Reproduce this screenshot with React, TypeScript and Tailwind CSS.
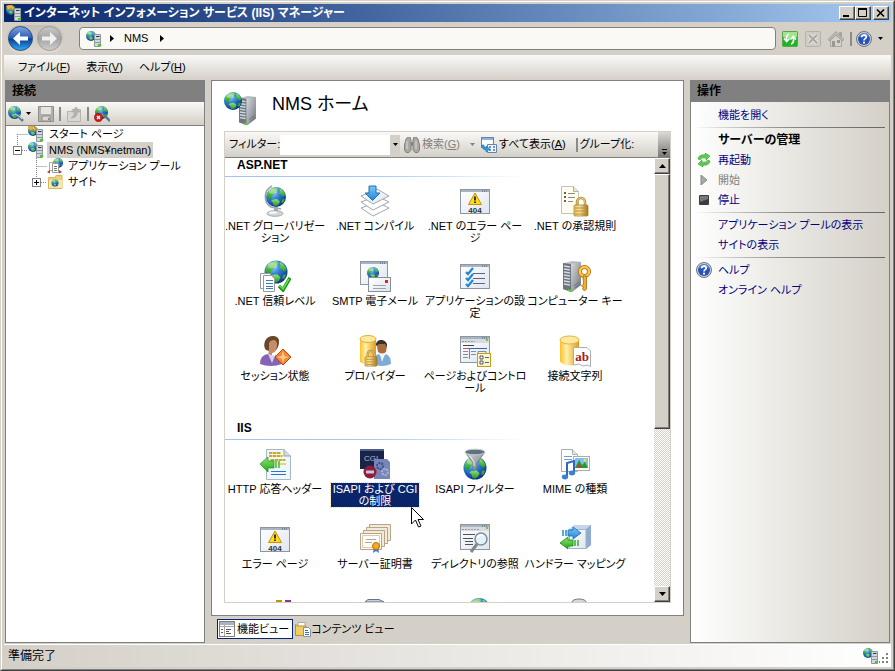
import { useState } from 'react';
import type { ReactNode } from 'react';

interface Feature {
  label: string;
  icon: ReactNode;
}

// Shared gradients for all of the icons
function Gradients() {
  return (
    <svg width="0" height="0" className="absolute" aria-hidden="true">
      <defs>
        <radialGradient id="sea" cx="35%" cy="25%" r="80%">
          <stop offset="0" stopColor="#9fd8fb" />
          <stop offset=".45" stopColor="#2f7fd8" />
          <stop offset="1" stopColor="#0b2a86" />
        </radialGradient>
        <linearGradient id="land" x1="0" y1="0" x2="0" y2="1">
          <stop offset="0" stopColor="#9be06a" />
          <stop offset="1" stopColor="#179a22" />
        </linearGradient>
        <linearGradient id="steel" x1="0" y1="0" x2="1" y2="1">
          <stop offset="0" stopColor="#d9dcdf" />
          <stop offset="1" stopColor="#6d737a" />
        </linearGradient>
        <linearGradient id="gold" x1="0" y1="0" x2="1" y2="0">
          <stop offset="0" stopColor="#fbc02e" />
          <stop offset=".35" stopColor="#fff0ac" />
          <stop offset="1" stopColor="#e39a12" />
        </linearGradient>
        <linearGradient id="brass" x1="0" y1="0" x2="1" y2="0">
          <stop offset="0" stopColor="#e8c25a" />
          <stop offset=".4" stopColor="#f8e39c" />
          <stop offset="1" stopColor="#a87416" />
        </linearGradient>
        <linearGradient id="page" x1="0" y1="0" x2="1" y2="1">
          <stop offset="0" stopColor="#ffffff" />
          <stop offset="1" stopColor="#dfe6ef" />
        </linearGradient>
        <linearGradient id="sky" x1="0" y1="0" x2="0" y2="1">
          <stop offset="0" stopColor="#7cc8f5" />
          <stop offset="1" stopColor="#1f86d6" />
        </linearGradient>
        <linearGradient id="leaf" x1="0" y1="0" x2="0" y2="1">
          <stop offset="0" stopColor="#8be870" />
          <stop offset="1" stopColor="#22a51b" />
        </linearGradient>
        <linearGradient id="navBlue" x1="0" y1="0" x2="0" y2="1">
          <stop offset="0" stopColor="#7fa4e0" />
          <stop offset=".48" stopColor="#2a5cb4" />
          <stop offset=".52" stopColor="#0b3a94" />
          <stop offset="1" stopColor="#2fb0f4" />
        </linearGradient>
        <linearGradient id="navGray" x1="0" y1="0" x2="0" y2="1">
          <stop offset="0" stopColor="#c9c9c9" />
          <stop offset=".5" stopColor="#a3a3a3" />
          <stop offset="1" stopColor="#cfcfcf" />
        </linearGradient>
      </defs>
    </svg>
  );
}

function Svg({ size = 32, box = 32, children }: { size?: number; box?: number; children: ReactNode }) {
  return (
    <svg width={size} height={size} viewBox={`0 0 ${box} ${box}`} className="shrink-0" aria-hidden="true">
      {children}
    </svg>
  );
}

function Globe({ x, y, r }: { x: number; y: number; r: number }) {
  return (
    <g transform={`translate(${x} ${y}) scale(${r / 10})`}>
      <circle r="10" fill="url(#sea)" />
      <path d="M-8.500-4C-6-8.500-2-9.500 1-9.200L2-7-1-5.500-1.500-3-4.500-1-5 2-8 1-9.300-1Z" fill="url(#land)" />
      <path d="M3-8.500C6-8 8.500-5 9.200-2L7 0 5-2.500 3-3 4-5.500Z" fill="url(#land)" />
      <path d="M-3 2.500 1 2 4 4.500 2.500 7.500 0 9.300-2.500 8-3 5.500-5 4Z" fill="url(#land)" />
      <path d="M6 2.500 8.800 2 7.500 5.500 5.500 6Z" fill="#35b02c" />
      <ellipse cx="-3" cy="-5.500" rx="4" ry="2.500" fill="#fff" opacity=".35" />
    </g>
  );
}

function Tower({ x, y, s = 1 }: { x: number; y: number; s?: number }) {
  return (
    <g transform={`translate(${x} ${y}) scale(${s})`}>
      <path d="M0 2 9 0 18 1V24L9 31 0 28Z" fill="url(#steel)" />
      <path d="M0 2 8 3V31L0 28Z" fill="#6c747d" />
      <path d="M1 5 7 6M1 8 7 9M1 11 7 12M1 14 7 15M1 17 7 18M1 20 7 21M1 23 7 24" stroke="#d2d9e0" strokeWidth="1.500" />
      <path d="M8 3 18 1V24L8 31Z" fill="url(#steel)" />
      <path d="M5 28 8 29V31L5 30Z" fill="#4fd414" />
      <path d="M11 25 16 21M12 27 17 23" stroke="#5d646b" strokeWidth=".800" />
    </g>
  );
}

function Win({ x = 1, y = 4, w = 30, h = 25 }: { x?: number; y?: number; w?: number; h?: number }) {
  return (
    <g>
      <rect x={x + 0.5} y={y + 0.5} width={w - 1} height={h - 1} fill="url(#page)" stroke="#8d96a1" />
      <rect x={x + 1} y={y + 1} width={w - 2} height="2" fill="#a9b4c3" />
      <path d={`M${x + w - 8} ${y + 2}h1M${x + w - 6} ${y + 2}h1M${x + w - 4} ${y + 2}h1`} stroke="#4a5a70" />
    </g>
  );
}

function Lock({ x, y }: { x: number; y: number }) {
  return (
    <g transform={`translate(${x} ${y})`}>
      <path d="M3 9V5A4 4 0 0 1 11 5V9" fill="none" stroke="#b58a2c" strokeWidth="2.500" />
      <path d="M3 9V5A4 4 0 0 1 11 5V9" fill="none" stroke="#f4dd93" strokeWidth=".800" />
      <rect x="0" y="8" width="14" height="11" rx="1" fill="url(#brass)" stroke="#a07824" strokeWidth=".700" />
      <path d="M1 11h12M1 14h12M1 17h12" stroke="#b48930" strokeWidth=".900" />
    </g>
  );
}

function Lines({ d, color = '#8293a8' }: { d: string; color?: string }) {
  return <path d={d} stroke={color} fill="none" />;
}

function ServerGlyph({ star = false }: { star?: boolean }) {
  return (
    <Svg size={16} box={16}>
      <Globe x={5} y={5} r={5} />
      <path d="M8.500 3.500h6v12h-6Z" fill="#d2d7de" stroke="#8f97a3" />
      <path d="M10 5.500h3.500" stroke="#2e3640" />
      <path d="M9 8.500h5M9 11.500h5" stroke="#8f97a3" />
      <path d="M12 14h3" stroke="#3fd010" strokeWidth="2" />
      {star && <path d="M0 1 3 0 6 0 8 3 7 6 5 3 2 5Z" fill="#f0b532" stroke="#b57a0c" strokeWidth=".500" />}
    </Svg>
  );
}

function HelpGlyph() {
  return (
    <Svg size={16} box={16}>
      <circle cx="8" cy="8" r="7.500" fill="#cfd3da" stroke="#70747c" />
      <circle cx="8" cy="8" r="6" fill="#2854b4" />
      <path d="M3 6a5 4 0 0 1 10 0Z" fill="#7797dc" opacity=".6" />
      <path d="M5.700 6.300C5.700 3.200 10.300 3.300 10.300 6 10.300 7.700 8 7.700 8 9.500" fill="none" stroke="#fff" strokeWidth="1.700" />
      <rect x="7" y="10.700" width="2" height="1.800" fill="#fff" />
    </Svg>
  );
}

const icons = {
  globalization: (
    <Svg>
      <path d="M13 1A12 12 0 0 0 12 22L22 24" fill="none" stroke="#9da3aa" strokeWidth="1.500" />
      <Globe x={17} y={12} r={10} />
      <path d="M15 22h4v5h-4Z" fill="#a6abb0" />
      <ellipse cx="16" cy="28.500" rx="8" ry="2.800" fill="#d4d7da" stroke="#a4a9ae" />
      <ellipse cx="14" cy="27.500" rx="4" ry="1" fill="#fff" />
    </Svg>
  ),
  compile: (
    <Svg>
      <path d="M2 23 18 17 30 23 14 31Z" fill="#fff" stroke="#a3a6aa" />
      <path d="M2 17 18 11 30 17 14 25Z" fill="#fff" stroke="#a3a6aa" />
      <path d="M2 11 18 4 30 11 14 19Z" fill="url(#page)" stroke="#a3a6aa" />
      <path d="M10 1h7v7h4l-7.500 7.500L6 8h4Z" fill="url(#sky)" stroke="#1d73bb" />
    </Svg>
  ),
  notFound: (
    <Svg>
      <Win />
      <path d="M16 8 22.500 19.500H9.500Z" fill="#ffdb22" stroke="#c99100" strokeLinejoin="round" />
      <path d="M16 11.500v4M16 16.500v1.500" stroke="#222" strokeWidth="1.800" />
      <text x="16" y="27.500" textAnchor="middle" fontSize="8" fontFamily="Liberation Sans, sans-serif" fontWeight="bold" fill="#333">404</text>
    </Svg>
  ),
  authorization: (
    <Svg>
      <path d="M2.500 1.500H14.500L19.500 6.500V28.500H2.500Z" fill="#fffdf0" stroke="#c9c4b0" />
      <path d="M14.500 1.500V6.500H19.500" fill="#e9e4d2" stroke="#b9b39c" />
      <path d="M5 8h2M5 12h2M5 16h2" stroke="#66625a" strokeWidth="2" />
      <Lines d="M9 8.500h7M9 12.500h7M9 16.500h5" color="#8d897d" />
      <Lock x={15} y={12} />
    </Svg>
  ),
  trust: (
    <Svg>
      <Globe x={17} y={12} r={11.5} />
      <path d="M1.500 13.500h10v15h-10Z" fill="#fff" stroke="#999" />
      <path d="M4.500 15.500h8l3 3v13h-11Z" fill="#fff" stroke="#999" />
      <Lines d="M7 20.500h7M7 23.500h7M7 26.500h7M7 28.500h7" color="#3a7bc8" />
      <path d="M20 26 24 30 31 18" fill="none" stroke="#1c9418" strokeWidth="3.500" />
      <path d="M20.500 25.500 24 29 30 19" fill="none" stroke="#67dd4e" strokeWidth="1.500" />
    </Svg>
  ),
  smtp: (
    <Svg>
      <Win y={1} w={28} h={24} />
      <Globe x={14} y={13} r={6} />
      <rect x="9.500" y="17.500" width="22" height="14" fill="url(#page)" stroke="#8a8f96" />
      <rect x="26" y="20" width="3" height="3" fill="#dd2525" />
      <Lines d="M14 25.500h13M14 28.500h13" color="#9fa4aa" />
    </Svg>
  ),
  appSettings: (
    <Svg>
      <Win />
      <path d="M7 12 9 14 14 8M7 18 9 20 14 14M7 24 9 26 14 20" fill="none" stroke="#2389cf" strokeWidth="2.200" />
      <Lines d="M14 13.500h12M14 18.500h12M14 23.500h12" color="#66608a" />
    </Svg>
  ),
  machineKey: (
    <Svg>
      <Tower x={4} y={1} />
      <circle cx="25.500" cy="11.500" r="4.500" fill="none" stroke="#b06c0c" strokeWidth="4" />
      <circle cx="25.500" cy="11.500" r="4.500" fill="none" stroke="#ffc648" strokeWidth="2.500" />
      <path d="M24 16h3.500v13l-2 2-2-2 1-2-2-1 2-2Z" fill="#f2ae2c" stroke="#a8680b" strokeWidth=".800" />
    </Svg>
  ),
  session: (
    <Svg>
      <path d="M6 6C9-1 20 0 20 6 20 13 17 16 13 17L7 15Q4 12 6 6Z" fill="#67482c" />
      <path d="M10 8C12 4 18 4 18 9 18 15 16 18 13 18V22H9L10 14Z" fill="#c58d68" />
      <path d="M1 29Q1 20 9 19L13 23 17 20 23 29Q12 33 1 29Z" fill="#8663b4" />
      <path d="M9 19 13 28 16 21" fill="#d8cfe8" />
      <path d="M24 14 32 22 24 30 16 22Z" fill="#f8862d" stroke="#b84a08" />
      <path d="M24 16 25.500 21 30 22 25.500 23.500 24 28 22.500 23.500 18 22 22.500 21Z" fill="#ffc58a" />
    </Svg>
  ),
  providers: (
    <Svg>
      <path d="M1 4V27Q9 33 17 27V4Z" fill="url(#gold)" />
      <ellipse cx="9" cy="4" rx="8" ry="3.500" fill="#ffe9a0" stroke="#deb03a" />
      <path d="M18 11C18 4 28 4 28 11L27 17Q23 20 19 17Z" fill="#a96a3d" />
      <path d="M17 11C16 3 29 3 28 12L26 9H20Z" fill="#39312d" />
      <path d="M14 29Q14 20 20 19L23 23 27 19Q32 21 32 29 23 33 14 29Z" fill="#7fa9d6" />
      <path d="M21 19 23 27 26 19" fill="#eef4fa" />
      <g transform="translate(6 15) scale(.85)"><Lock x={0} y={0} /></g>
    </Svg>
  ),
  pages: (
    <Svg>
      <Win y={1} h={27} />
      <rect x="2" y="4" width="28" height="4" fill="#d7dade" />
      <path d="M3 6.500h13" stroke="#969da4" strokeDasharray="2 1" />
      <rect x="27" y="4" width="2" height="2" fill="#7acb21" />
      <path d="M4 10.500h11" stroke="#444" />
      <path d="M4 13.500h24" stroke="#3164c8" />
      <path d="M4 13.500h5" stroke="#e05252" />
      <path d="M10.500 13.500V24" stroke="#4d89e0" />
      <Lines d="M4 16.500h5M4 19.500h5M4 22.500h5M12 16.500h5M12 19.500h5M19 16.500h8v3h-8Z" color="#858d98" />
      <rect x="18.500" y="18.500" width="13" height="13" fill="#fff7cc" stroke="#c79d16" />
      <path d="M21 21h3v3h-3ZM21 26h3v3h-3Z" fill="#fff" stroke="#555" />
      <Lines d="M26 22.500h4M26 27.500h4" color="#3967b5" />
    </Svg>
  ),
  connection: (
    <Svg>
      <path d="M1 5V27Q10 34 20 27V5Z" fill="url(#gold)" />
      <ellipse cx="10.500" cy="5" rx="9.500" ry="4" fill="#ffe9a0" stroke="#e0b23d" />
      <path d="M14.500 12.500H28L31.500 16V31.500L28 30 24 31 20 29 14.500 30Z" fill="#fff" stroke="#aaaeb2" />
      <text x="23" y="26" textAnchor="middle" fontSize="13" fontWeight="bold" fontFamily="Liberation Serif, serif" fill="#a61c22">ab</text>
    </Svg>
  ),
  headers: (
    <Svg>
      <path d="M7.500 1.500H25L31.500 8V31.500H7.500Z" fill="#edf7fd" stroke="#a9b7c0" />
      <path d="M25 1.500V8h6.500" fill="#cfdbe2" stroke="#94a5b0" />
      <path d="M10 5h12M10 8h14M11 12h16M19 16h8" stroke="#f0d65a" strokeWidth="2" />
      <path d="M10 5h11M10 8h13M12 12h14" stroke="#6a664c" strokeDasharray="3 1" strokeWidth=".800" />
      <path d="M1 16 9 9V13H15V20H9V24Z" fill="url(#leaf)" stroke="#1d8c1b" strokeWidth=".700" />
      <path d="M17 13v7M20 13v7" stroke="#3fbd35" strokeWidth="1.500" />
      <Lines d="M12 23.500h15M12 26.500h15" color="#2d72c5" />
    </Svg>
  ),
  isapiCgi: (
    <Svg>
      <rect x="1" y="1" width="24" height="20" fill="#1a2447" />
      <rect x="1" y="1" width="24" height="2" fill="#4c5c8d" />
      <text x="12" y="13" textAnchor="middle" fontSize="8" fontFamily="Liberation Sans, sans-serif" fill="#b2bad5">CGI</text>
      <path d="M15 11H28L31 14V31H15Z" fill="#7886b5" />
      <circle cx="21" cy="18" r="3" fill="none" stroke="#37518c" strokeWidth="2" strokeDasharray="2 1" />
      <circle cx="26" cy="24" r="3" fill="none" stroke="#a8b6dc" strokeWidth="2" strokeDasharray="2 1" />
      <circle cx="11" cy="24" r="6.500" fill="#8c1d3c" />
      <rect x="7" y="22.500" width="8" height="3" fill="#c9c5df" />
    </Svg>
  ),
  isapiFilter: (
    <Svg>
      <Globe x={16} y={20} r={11.500} />
      <path d="M6 4 14 15V23L18 20V15L26 4Z" fill="url(#steel)" stroke="#66717b" strokeWidth=".700" />
      <ellipse cx="16" cy="4" rx="10" ry="2.800" fill="#607080" stroke="#c2ccd4" />
      <path d="M11 8 15 14V18" stroke="#fff" fill="none" opacity=".8" />
    </Svg>
  ),
  mime: (
    <Svg>
      <path d="M2.500 1.500H13.500L18.500 6.500V23.500H2.500Z" fill="#fff" stroke="#a5adb5" />
      <path d="M13.500 1.500V6.500H18.500" fill="#e3e7eb" stroke="#a5adb5" />
      <Lines d="M5 8.500h8M5 11.500h8" color="#6ea0d6" />
      <rect x="14.500" y="8.500" width="16" height="14" fill="#fff" stroke="#a5adb5" />
      <rect x="16" y="10" width="13" height="10" fill="#80bdf0" />
      <path d="M16 20 20 12 23 17 26 14 29 20Z" fill="#269a31" />
      <path d="M18 20 20 15 22 20Z" fill="#dd3322" />
      <circle cx="26" cy="12" r="1.500" fill="#ffdf26" />
      <path d="M8 28V15L15 13V24" fill="none" stroke="#2f67be" strokeWidth="2" />
      <ellipse cx="6" cy="29" rx="3.200" ry="2.400" fill="#3e7fd6" />
      <ellipse cx="13" cy="25" rx="3.200" ry="2.400" fill="#3e7fd6" />
    </Svg>
  ),
  certificates: (
    <Svg>
      <path d="M10.500 1.500h21v16h-21Z" fill="#f3ead9" stroke="#b5a689" />
      <path d="M7.500 4.500h21v16h-21Z" fill="#f3ead9" stroke="#b5a689" />
      <path d="M4.500 7.500h21v16h-21Z" fill="#f3ead9" stroke="#b5a689" />
      <path d="M1.500 10.500h21v16h-21Z" fill="#fffdf6" stroke="#b5a689" />
      <path d="M3.500 12.500h17v12h-17Z" fill="none" stroke="#dccba8" />
      <Lines d="M7 16.500h10M6 19.500h7" color="#aaa8a1" />
      <path d="M15 24 14 30 17 28 20 30 19 24Z" fill="#3a78c8" />
      <circle cx="17" cy="23" r="3.500" fill="#f5a91e" stroke="#bd720b" />
    </Svg>
  ),
  browsing: (
    <Svg>
      <Win y={1} h={26} />
      <rect x="2" y="4" width="28" height="4" fill="#d7dade" />
      <path d="M3 6.500h17" stroke="#969da4" strokeDasharray="2 1" />
      <rect x="27" y="4" width="2" height="2" fill="#7acb21" />
      <Lines d="M4 11.500h12M4 15.500h10M6 18.500h8M6 21.500h8" color="#4c5157" />
      <path d="M18 21 12 29" stroke="#82878c" strokeWidth="3" />
      <circle cx="22" cy="16" r="6" fill="#e2f2fb" stroke="#858c92" strokeWidth="1.500" />
      <path d="M18 15Q20 11 24 12" fill="none" stroke="#fff" strokeWidth="1.500" />
    </Svg>
  ),
  handlers: (
    <Svg>
      <path d="M10 6 15 2H32V22L27 26H10Z" fill="#c5d6ec" />
      <path d="M10 6H27V26H10Z" fill="url(#page)" />
      <path d="M27 6 32 2V22L27 26Z" fill="#8fabce" />
      <path d="M10.500 6.500H27V25.500H10.500Z" fill="none" stroke="#9db4d0" />
      <path d="M9 7H14V4L22 10 14 16V13H9Z" fill="url(#sky)" stroke="#1569ad" strokeWidth=".800" />
      <path d="M4 7v6M7 7v6" stroke="#2689cf" strokeWidth="1.500" />
      <path d="M14 17H9V14L1 20 9 26V23H14Z" fill="url(#leaf)" stroke="#198217" strokeWidth=".800" />
      <path d="M16 17v6M19 17v6" stroke="#33af2b" strokeWidth="1.500" />
    </Svg>
  ),
};

const aspNet: Feature[] = [
  { label: '.NET グローバリゼー\nション', icon: icons.globalization },
  { label: '.NET コンパイル', icon: icons.compile },
  { label: '.NET のエラー ペー\nジ', icon: icons.notFound },
  { label: '.NET の承認規則', icon: icons.authorization },
  { label: '.NET 信頼レベル', icon: icons.trust },
  { label: 'SMTP 電子メール', icon: icons.smtp },
  { label: 'アプリケーションの設\n定', icon: icons.appSettings },
  { label: 'コンピューター キー', icon: icons.machineKey },
  { label: 'セッション状態', icon: icons.session },
  { label: 'プロバイダー', icon: icons.providers },
  { label: 'ページおよびコントロ\nール', icon: icons.pages },
  { label: '接続文字列', icon: icons.connection },
];

const iis: Feature[] = [
  { label: 'HTTP 応答ヘッダー', icon: icons.headers },
  { label: 'ISAPI および CGI\nの制限', icon: icons.isapiCgi },
  { label: 'ISAPI フィルター', icon: icons.isapiFilter },
  { label: 'MIME の種類', icon: icons.mime },
  { label: 'エラー ページ', icon: icons.notFound },
  { label: 'サーバー証明書', icon: icons.certificates },
  { label: 'ディレクトリの参照', icon: icons.browsing },
  { label: 'ハンドラー マッピング', icon: icons.handlers },
  // Last row is cut off by the bottom of the list
  { label: '', icon: <Svg><path d="M17 2h6v3h-6Z" fill="#b8960c" /><path d="M26 2h6v3h-6Z" fill="#97309b" /></Svg> },
  { label: '', icon: <Svg><path d="M6 4 9 1.500H20L25 4Z" fill="#c9cde0" stroke="#6c7191" /></Svg> },
  { label: '', icon: <Svg><Globe x={20} y={11} r={11} /></Svg> },
  { label: '', icon: <Svg><ellipse cx="20" cy="4" rx="7" ry="3" fill="#d5d8dd" stroke="#74797f" /></Svg> },
];

const raised = 'bg-[#d4d0c8] border border-t-white border-l-white border-r-[#404040] border-b-[#404040] shadow-[inset_-1px_-1px_0_#808080]';

function FeatureGroup({ title, items, selected, onSelect }: {
  title: string;
  items: Feature[];
  selected: string;
  onSelect: (label: string) => void;
}) {
  return (
    <section>
      <h2 className="h-[18px] pl-3 text-xs leading-[14px] font-bold">{title}</h2>
      <div className="h-px w-[300px] bg-linear-to-r from-[#a0c4f0] via-[#a6caf0] to-white" />
      <div className="grid grid-cols-[repeat(auto-fill,100px)] pt-2">
        {items.map((f, i) => {
          const active = f.label !== '' && f.label === selected;
          return (
            <button
              key={i}
              type="button"
              onClick={() => onSelect(f.label)}
              className="relative flex h-[75px] flex-col items-center gap-[3px]"
            >
              {f.icon}
              <span className={`px-0.5 text-center leading-3 whitespace-pre ${active ? 'bg-[#0a246a] text-white outline-1 outline-dotted outline-[#f5db95]' : ''}`}>
                {f.label}
              </span>
              {active && (
                <svg width="13" height="21" viewBox="0 0 13 21" className="absolute top-[59px] left-[86px]" aria-hidden="true">
                  <path d="M.5.5V17L4.500 13 7.500 20 10 19 7 12.500H12.500Z" fill="#fff" stroke="#000" />
                </svg>
              )}
            </button>
          );
        })}
      </div>
    </section>
  );
}

function Caret({ className = '' }: { className?: string }) {
  return (
    <svg width="5" height="3" viewBox="0 0 5 3" className={`shrink-0 ${className}`} aria-hidden="true">
      <path d="M0 0h5L2.500 3Z" fill="currentColor" />
    </svg>
  );
}

function Divider() {
  return <div className="h-3.5 w-0.5 shrink-0 bg-[#8b8b8b]" />;
}

function TitleBar() {
  return (
    <header className="flex h-[18px] shrink-0 items-center bg-linear-to-r from-[#0a246a] to-[#a6caf0] pr-0.5 pl-0.5">
      <ServerGlyph star />
      <h1 className="grow pl-0.5 text-xs leading-4 font-bold whitespace-nowrap text-white">
        インターネット インフォメーション サービス (IIS) マネージャー
      </h1>
      <button type="button" aria-label="最小化" className={`h-3.5 w-4 ${raised}`}>
        <svg width="14" height="12"><path d="M3 9h6" stroke="#000" strokeWidth="2" /></svg>
      </button>
      <button type="button" aria-label="最大化" className={`h-3.5 w-4 ${raised}`}>
        <svg width="14" height="12"><path d="M2.500 2v7.500h8V2M2 2h9" fill="none" stroke="#000" /><path d="M2 2h9" stroke="#000" strokeWidth="2" /></svg>
      </button>
      <button type="button" aria-label="閉じる" className={`ml-0.5 h-3.5 w-4 ${raised}`}>
        <svg width="14" height="12"><path d="M3 2.500 10 9.500M10 2.500 3 9.500" stroke="#000" strokeWidth="1.600" /></svg>
      </button>
    </header>
  );
}

function NavBar() {
  return (
    <nav className="flex h-[33px] shrink-0 items-center pr-0.5 pl-0.5">
      <div className="flex h-7 items-center gap-1 rounded-full bg-linear-to-b from-[#c2beb6] to-[#dedad3] px-0.5">
        <button type="button" aria-label="戻る">
          <Svg size={25} box={25}>
            <circle cx="12.500" cy="12.500" r="12" fill="url(#navBlue)" stroke="#32507f" />
            <path d="M5 12.500 12 6V10.500H20V14.500H12V19Z" fill="#fff" />
          </Svg>
        </button>
        <button type="button" aria-label="進む">
          <Svg size={25} box={25}>
            <circle cx="12.500" cy="12.500" r="12" fill="url(#navGray)" stroke="#a09d98" />
            <path d="M20 12.500 13 6V10.500H5V14.500H13V19Z" fill="#efefef" />
          </Svg>
        </button>
      </div>
      <div className="mr-1.5 ml-[15px] flex h-[23px] grow items-center rounded border border-[#808080] bg-[#faf9f6] pl-1.5">
        <ServerGlyph />
        <svg width="4" height="7" className="mx-2"><path d="M0 0 4 3.500 0 7Z" /></svg>
        <span className="pl-0.5">NMS</span>
        <svg width="4" height="7" className="ml-3"><path d="M0 0 4 3.500 0 7Z" /></svg>
      </div>
      <div className="flex items-center gap-[7px]">
        <button type="button" aria-label="更新">
          <Svg size={16} box={16}>
            <rect x=".5" y=".5" width="15" height="15" rx="1" fill="#1fb427" stroke="#53a94b" />
            <path d="M1 1h14v5Q8 9 1 6Z" fill="#9fe58d" />
            <path d="M7 3Q4 4 4.500 9M2 7.500 4.700 10.500 7.500 7.500M9 13Q12 12 11.500 7M8.500 8.500 11.300 5.500 14 8.500" fill="none" stroke="#fff" strokeWidth="1.700" />
          </Svg>
        </button>
        <button type="button" aria-label="中止" disabled>
          <Svg size={16} box={16}>
            <rect x=".5" y=".5" width="15" height="15" rx="1" fill="#cfccc6" stroke="#b5b2ac" />
            <path d="M4 4 12 12M12 4 4 12" stroke="#e6e4e0" strokeWidth="4" />
            <path d="M4 4 12 12M12 4 4 12" stroke="#aaa7a2" strokeWidth="2" />
          </Svg>
        </button>
        <button type="button" aria-label="ホーム" disabled>
          <Svg size={16} box={16}>
            <path d="M2.500 8V15.500H13.500V8" fill="#d6d3ce" stroke="#a9a6a1" />
            <path d="M11 1h3v5h-3Z" fill="#aaa7a2" />
            <path d="M0 8.500 8 .5 16 8.500 14 10 8 4 2 10Z" fill="#b9b6b1" stroke="#989590" strokeWidth=".700" />
            <path d="M4 10h3v5.500H4ZM9 9h3v3H9Z" fill="#9b9894" />
          </Svg>
        </button>
      </div>
      <div className="flex items-center gap-1 pl-1.5">
        <Divider />
        <button type="button" aria-label="ヘルプ" className="flex items-center gap-1.5 pr-1.5"><HelpGlyph /><Caret /></button>
      </div>
    </nav>
  );
}

function PanelTitle({ children }: { children: ReactNode }) {
  return <h2 className="h-[21px] shrink-0 bg-[#808080] pl-1.5 text-xs leading-5 font-bold">{children}</h2>;
}

function TreeRow({ indent, lines, box, icon, label, selected = false }: {
  indent: number;
  lines: string;
  box?: '+' | '-';
  icon: ReactNode;
  label: string;
  selected?: boolean;
}) {
  const cx = indent - 10.5;
  return (
    <li className="flex h-4 items-center">
      <svg width={indent} height="16" className="shrink-0" aria-hidden="true">
        <path d={lines} stroke="#808080" strokeDasharray="1 1" fill="none" />
        {box && <rect x={cx - 4} y="4.500" width="8" height="8" fill="#fff" stroke="#808080" />}
        {box && <path d={`M${cx - 2.5} 8.500h5`} stroke="#000" />}
        {box === '+' && <path d={`M${cx} 6v5`} stroke="#000" />}
      </svg>
      {icon}
      <span className={`ml-[3px] px-0.5 leading-4 whitespace-nowrap ${selected ? 'bg-[#d4d0c8]' : ''}`}>{label}</span>
    </li>
  );
}

function Connections() {
  return (
    <aside className="flex w-[200px] shrink-0 flex-col border border-[#808080] bg-white">
      <PanelTitle>接続</PanelTitle>
      <div className="flex h-6 shrink-0 items-center gap-[5px] border-b border-[#808080] bg-linear-to-b from-[#faf9f7] to-[#d4d0c8] pl-0.5">
        <button type="button" aria-label="接続の作成" className="flex items-center gap-0.5">
          <Svg size={16} box={16}>
            <Globe x={6.5} y={6.5} r={6.5} />
            <path d="M7 9 11 11 15 15" stroke="#5a7f93" strokeWidth="2.500" fill="none" />
            <path d="M7 8 11 10 14 13" stroke="#c4e2ea" fill="none" />
          </Svg>
          <Caret />
        </button>
        <button type="button" aria-label="保存" disabled className="ml-0.5">
          <Svg size={16} box={16}>
            <path d="M.5.500H15.500V15.500H.5Z" fill="#b0b0ae" stroke="#8f8f8d" />
            <path d="M3 1h10v7H3Z" fill="#e5e4e1" />
            <path d="M4 10h8v5H4Z" fill="#d8d7d4" stroke="#8f8f8d" />
            <path d="M10 12h1.500v2H10Z" fill="#888" />
          </Svg>
        </button>
        <Divider />
        <button type="button" aria-label="上へ" disabled>
          <Svg size={16} box={16}>
            <path d="M1.500 5.500h4l1-2h8v12h-13Z" fill="#d9d7d3" stroke="#b7b4af" />
            <path d="M5 12Q8 11 8.500 6H6L10 1 14 6H11.500Q11 12 5 12Z" fill="#b5b3af" stroke="#9f9d99" strokeWidth=".500" />
          </Svg>
        </button>
        <Divider />
        <button type="button" aria-label="接続の削除">
          <Svg size={16} box={16}>
            <Globe x={7.5} y={6.5} r={6.5} />
            <path d="M10 9 12 11 16 15" stroke="#5a7f93" strokeWidth="2.500" fill="none" />
            <circle cx="4.500" cy="11.500" r="4.200" fill="#cf1818" stroke="#8d0c0c" strokeWidth=".500" />
            <path d="M3 10 6 13M6 10 3 13" stroke="#fff" strokeWidth="1.400" />
          </Svg>
        </button>
      </div>
      <ul>
        <TreeRow indent={22} lines="M11.500 8V16M11.500 8.500H22" icon={<ServerGlyph star />} label="スタート ページ" />
        <TreeRow indent={22} lines="M11.500 0V8M16 8.500H22" box="-" icon={<ServerGlyph />} label="NMS (NMS¥netman)" selected />
        <TreeRow
          indent={41}
          lines="M30.500 0V16M30.500 8.500H41"
          icon={
            <Svg size={16} box={16}>
              <Globe x={11} y={5} r={5} />
              <path d="M2.500 4.500h5v8h-5Z" fill="#fff" stroke="#aaa" />
              <path d="M5.500 5.500h5l1 1v8h-6Z" fill="#fff" stroke="#999" />
              <path d="M7 8.500h3M7 10.500h3M7 12.500h3" stroke="#777" />
              <path d="M0 14 3 12V15.500ZM15 14 12 12V15.500Z" fill="#c9302c" />
            </Svg>
          }
          label="アプリケーション プール"
        />
        <TreeRow
          indent={41}
          lines="M30.500 0V8M35 8.500H41"
          box="+"
          icon={
            <Svg size={16} box={16}>
              <path d="M1.500 3.500H8l1-2h6v13H1.500Z" fill="#f0d17a" stroke="#d9b65c" />
              <path d="M2 6h13v8H2Z" fill="#fae8a8" />
              <Globe x={8} y={9} r={3.5} />
            </Svg>
          }
          label="サイト"
        />
      </ul>
    </aside>
  );
}

function FilterBar() {
  return (
    <div className="flex h-[26px] shrink-0 items-center border-b border-[#808080] bg-linear-to-b from-[#faf9f7] to-[#d4d0c8] pl-1 whitespace-nowrap">
      <label htmlFor="filter" className="w-[51px]">フィルター:</label>
      <input id="filter" className="h-5 w-[110px] bg-white px-1 outline-none" />
      <button type="button" aria-label="履歴" className="flex h-5 w-2.5 items-center justify-center bg-[#d4d0c8]"><Caret /></button>
      <button type="button" disabled className="ml-1 flex items-center text-[#808080]">
        <Svg size={16} box={16}>
          <path d="M2 2 4 0H6L7 3V13L5 15.500H2L.5 13V8ZM14 2 12 0H10L9 3V13L11 15.500H14L15.500 13V8Z" fill="#aaa8a4" stroke="#85837f" />
          <path d="M7 5h2v4H7Z" fill="#85837f" />
          <path d="M3 4V12M12 4V12" stroke="#dedcd8" />
        </Svg>
        <span className="pl-0.5">検索(<u>G</u>)</span>
        <Caret className="ml-2.5" />
      </button>
      <button type="button" className="ml-1.5 flex items-center">
        <Svg size={16} box={16}>
          <rect x=".5" y=".5" width="12" height="10" fill="#fff" stroke="#6883a9" />
          <rect x="1" y="1" width="11" height="2" fill="#91b2e0" />
          <path d="M6.500 7.500h9v8h-9Z" fill="#edf3fb" stroke="#6883a9" />
          <path d="M8 10h2M12 10h2M8 13h2M12 13h2" stroke="#4475ba" strokeWidth="1.500" />
          <path d="M1 8Q1 13 5 13V15L9 12 5 9V11Q3 11 3 8Z" fill="#349adc" stroke="#126aa9" strokeWidth=".500" />
        </Svg>
        <span className="pl-0.5">すべて表示(<u>A</u>)</span>
      </button>
      <div className="ml-2.5 flex items-center gap-0.5"><Divider /><span>グループ化:</span></div>
      <button type="button" aria-label="その他" className="ml-auto flex h-full w-3 flex-col items-center justify-end bg-linear-to-b from-[#dddad5] to-[#7b7974] pb-0.5">
        <span className="h-px w-[5px] bg-black" />
        <Caret className="mt-0.5" />
      </button>
    </div>
  );
}

function ScrollBar() {
  return (
    <div className="flex w-4 shrink-0 flex-col bg-[conic-gradient(#d4d0c8_25%,#fff_0_50%,#d4d0c8_0_75%,#fff_0)] bg-[length:2px_2px]">
      <button type="button" aria-label="上へスクロール" className={`flex h-4 shrink-0 items-center justify-center ${raised}`}>
        <svg width="7" height="4"><path d="M3.500 0 7 4H0Z" /></svg>
      </button>
      <div className="grow"><div className={`h-[62%] ${raised}`} /></div>
      <button type="button" aria-label="下へスクロール" className={`flex h-4 shrink-0 items-center justify-center ${raised}`}>
        <svg width="7" height="4"><path d="M0 0H7L3.500 4Z" /></svg>
      </button>
    </div>
  );
}

function Home() {
  const [selected, setSelected] = useState('ISAPI および CGI\nの制限');
  const [view, setView] = useState('features');
  const tabClass = 'flex h-5 items-center border pl-px leading-4';

  return (
    <main className="flex min-w-0 grow flex-col">
      <div className="flex min-h-0 grow flex-col border border-[#808080] bg-white px-3 pb-3">
        <div className="flex h-[50px] shrink-0 items-center gap-3.5 pt-1.5">
          <svg width="34" height="34" viewBox="0 0 34 34" className="shrink-0" aria-hidden="true">
            <Tower x={15} y={4} s={0.94} />
            <Globe x={9} y={9} r={9} />
          </svg>
          <h2 className="pb-2.5 text-lg leading-6">NMS ホーム</h2>
        </div>
        <div className="flex min-h-0 grow flex-col border border-[#d4d0c8]">
          <FilterBar />
          <div className="flex min-h-0 grow">
            <div className="flex min-h-0 grow basis-0 flex-col gap-[11px] overflow-hidden">
              <FeatureGroup title="ASP.NET" items={aspNet} selected={selected} onSelect={setSelected} />
              <FeatureGroup title="IIS" items={iis} selected={selected} onSelect={setSelected} />
            </div>
            <ScrollBar />
          </div>
        </div>
      </div>
      <div className="flex h-[27px] shrink-0 items-start pt-[3px] pl-1.5">
        <button type="button" onClick={() => setView('features')} className={`${tabClass} pr-[3px] ${view === 'features' ? 'border-[#0a246a] bg-white' : 'border-transparent'}`}>
          <Svg size={16} box={16}>
            <rect x=".5" y=".5" width="15" height="15" fill="#fff" stroke="#85817a" />
            <path d="M1 1h14v3H1Z" fill="#a9b4c2" />
            <path d="M5.500 4v11M1 5.500h14" stroke="#a8a59f" />
            <path d="M2 8.500h2M2 11.500h2M7 8.500h5M7 10.500h3M7 12.500h5" stroke="#555" />
          </Svg>
          <span className="pl-0.5">機能ビュー</span>
        </button>
        <button type="button" onClick={() => setView('content')} className={`${tabClass} pr-[3px] ${view === 'content' ? 'border-[#0a246a] bg-white' : 'border-transparent'}`}>
          <Svg size={16} box={16}>
            <path d="M3 1.500h7V6H3Z" fill="#fff" stroke="#aaa" />
            <path d="M.5 3.500 3 5H11V14.500H.5Z" fill="#f1cd67" stroke="#bb8f28" />
            <path d="M8.500 6.500h5l2 2v7h-7Z" fill="#fff" stroke="#8a929b" />
            <path d="M10 9.500h3M10 11.500h4M10 13.500h4" stroke="#2f76c9" />
          </Svg>
          <span>コンテンツ ビュー</span>
        </button>
      </div>
    </main>
  );
}

function ActionSeparator() {
  return <div className="m-0.5 h-px bg-linear-to-r from-transparent via-[#8a8a88] to-[#666]" />;
}

function Action({ icon, disabled = false, children }: { icon?: ReactNode; disabled?: boolean; children: ReactNode }) {
  return (
    <div className="flex h-5 items-center gap-1.5 pl-[5px]">
      <span className="flex w-4 justify-center">{icon}</span>
      {disabled
        ? <button type="button" disabled className="text-[#808080]">{children}</button>
        : <a href="#" className="whitespace-nowrap text-[#000080]">{children}</a>}
    </div>
  );
}

function Actions() {
  return (
    <aside className="flex w-[200px] shrink-0 flex-col border border-[#808080] bg-linear-to-r from-white via-[#e8e7e2] to-[#d4d0c8]">
      <PanelTitle>操作</PanelTitle>
      <div className="pt-[3px] pr-0.5">
        <Action>機能を開く</Action>
        <ActionSeparator />
        <h3 className="h-5 pl-[27px] text-xs leading-5 font-bold">サーバーの管理</h3>
        <Action
          icon={
            <Svg size={14} box={14}>
              <path d="M1 6Q2 1 8 2V0L13 3 9 7V5Q5 4 3 7Z" fill="#5bcc4b" stroke="#289324" strokeWidth=".500" />
              <path d="M13 8Q12 13 6 12V14L1 11 5 7V9Q9 10 11 7Z" fill="#5bcc4b" stroke="#289324" strokeWidth=".500" />
            </Svg>
          }
        >
          再起動
        </Action>
        <Action disabled icon={<Svg size={10} box={10}><path d="M2 0 8 5 2 10Z" fill="#a9a9a9" stroke="#888" /></Svg>}>開始</Action>
        <Action icon={<Svg size={10} box={10}><rect width="10" height="10" rx="1" fill="#3c3c3c" /><path d="M1 1h8v3L1 7Z" fill="#777" /></Svg>}>停止</Action>
        <ActionSeparator />
        <Action>アプリケーション プールの表示</Action>
        <Action>サイトの表示</Action>
        <ActionSeparator />
        <Action icon={<HelpGlyph />}>ヘルプ</Action>
        <Action>オンライン ヘルプ</Action>
      </div>
    </aside>
  );
}

export default function App() {
  return (
    <div className="h-screen border border-t-[#d4d0c8] border-r-[#404040] border-b-[#404040] border-l-[#d4d0c8] font-['Liberation_Sans','Noto_Sans_CJK_JP',sans-serif] text-[11px] text-black [font-feature-settings:'palt']">
      <Gradients />
      <div className="flex h-full flex-col border border-t-white border-r-[#808080] border-b-[#808080] border-l-white bg-[#d4d0c8] p-0.5">
        <TitleBar />
        <NavBar />
        <div className="flex h-[25px] shrink-0 items-center gap-4 bg-linear-to-b from-[#faf9f7] to-[#d4d0c8] pl-3.5">
          <button type="button">ファイル(<u>F</u>)</button>
          <button type="button">表示(<u>V</u>)</button>
          <button type="button">ヘルプ(<u>H</u>)</button>
        </div>
        <div className="flex min-h-0 grow gap-1.5 px-px">
          <Connections />
          <Home />
          <Actions />
        </div>
        <footer className="mt-px flex h-[23px] shrink-0 items-center border-t border-white bg-linear-to-r from-[#d4d0c8] to-white pr-0.5 pl-1">
          <span className="grow text-xs">準備完了</span>
          <ServerGlyph />
          <svg width="10" height="16" aria-hidden="true">
            <path d="M7 5h2v2H7ZM3 9h2v2H3ZM7 9h2v2H7ZM0 13h1v2H0ZM3 13h2v2H3ZM7 13h2v2H7Z" fill="#808080" />
          </svg>
        </footer>
      </div>
    </div>
  );
}
